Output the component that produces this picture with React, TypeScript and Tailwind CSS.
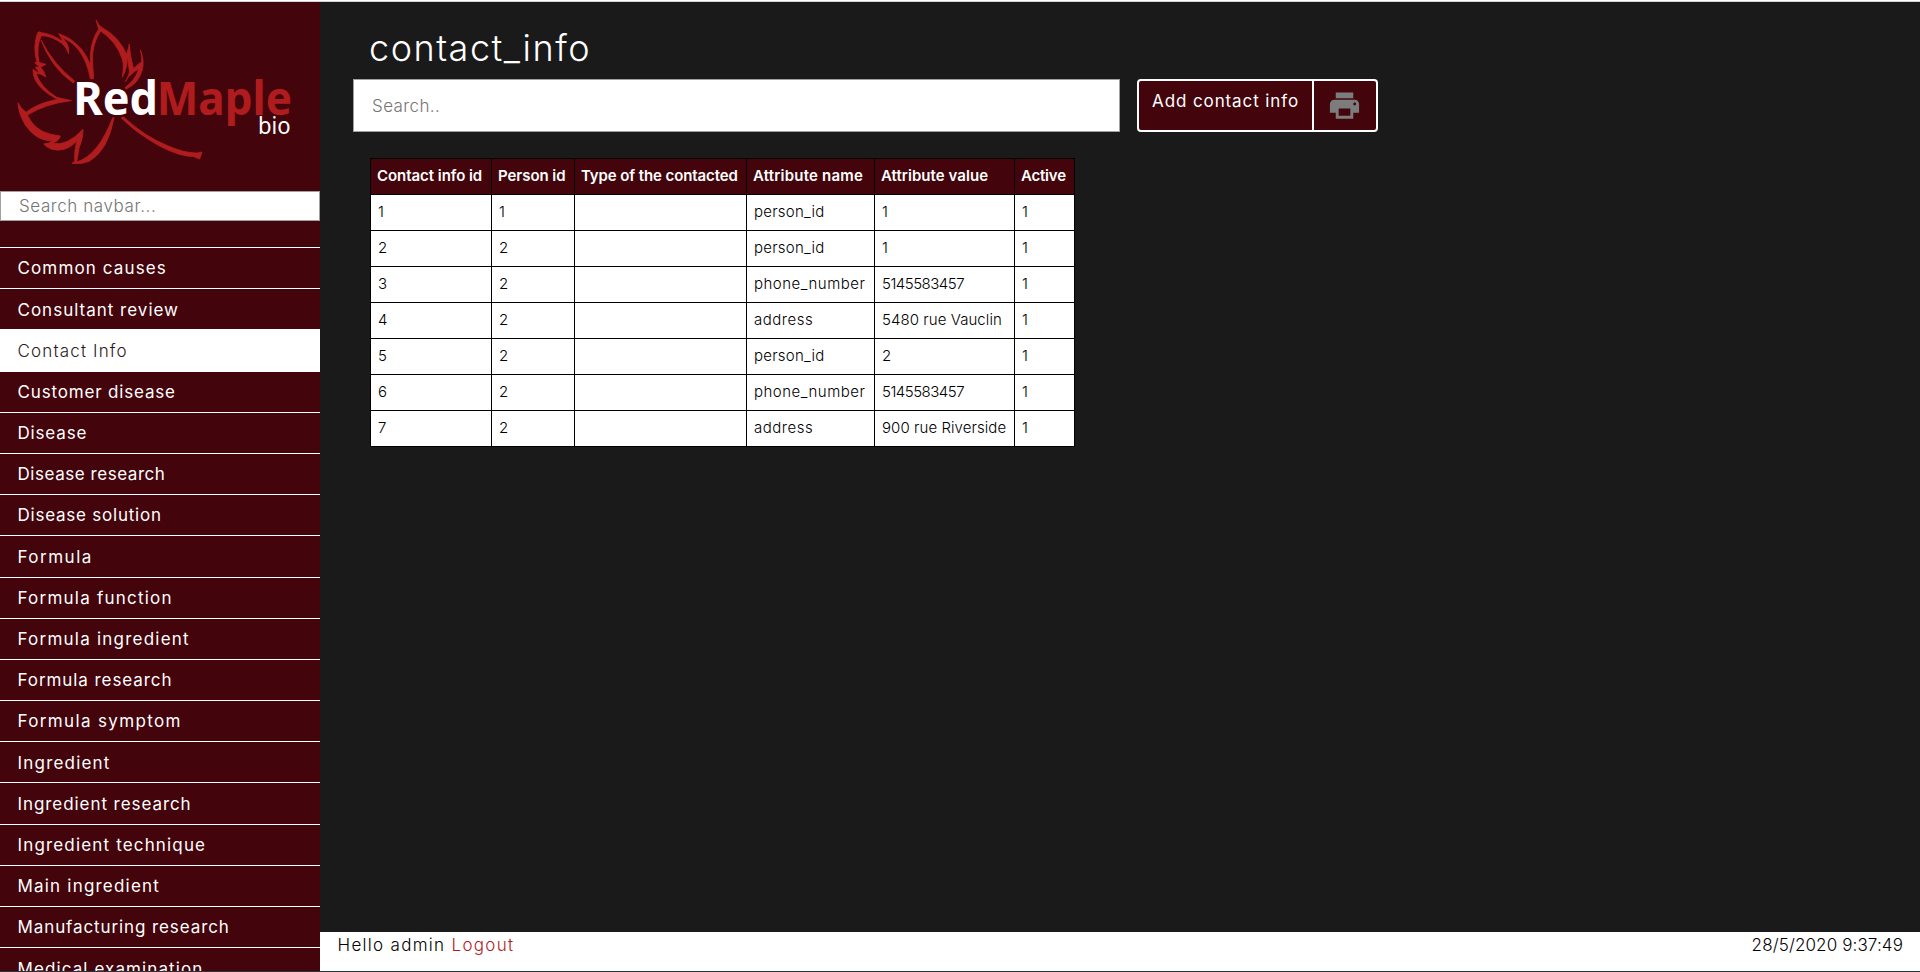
import { MdPrint } from "react-icons/md";

const navItems = [
  { label: "Common causes", tracking: "tracking-[1.13px]" },
  { label: "Consultant review", tracking: "tracking-[1px]" },
  { label: "Contact Info", tracking: "tracking-[1.15px]", active: true },
  { label: "Customer disease", tracking: "tracking-[0.83px]" },
  { label: "Disease", tracking: "tracking-[0.83px]" },
  { label: "Disease research", tracking: "tracking-[0.55px]" },
  { label: "Disease solution", tracking: "tracking-[0.77px]" },
  { label: "Formula", tracking: "tracking-[1.5px]" },
  { label: "Formula function", tracking: "tracking-[1.23px]" },
  { label: "Formula ingredient", tracking: "tracking-[1.23px]" },
  { label: "Formula research", tracking: "tracking-[0.93px]" },
  { label: "Formula symptom", tracking: "tracking-[1.35px]" },
  { label: "Ingredient", tracking: "tracking-[1.2px]" },
  { label: "Ingredient research", tracking: "tracking-[0.93px]" },
  { label: "Ingredient technique", tracking: "tracking-[1.16px]" },
  { label: "Main ingredient", tracking: "tracking-[1.2px]" },
  { label: "Manufacturing research", tracking: "tracking-[0.9px]" },
  { label: "Medical examination", tracking: "tracking-[1.1px]" },
];

const columns = [
  { label: "Contact info id", style: "w-[121px] tracking-[-0.05px]" },
  { label: "Person id", style: "w-[83px] tracking-[-0.05px]" },
  { label: "Type of the contacted", style: "w-[172px] tracking-[-0.1px]" },
  { label: "Attribute name", style: "w-[128px] tracking-[0.2px]" },
  { label: "Attribute value", style: "w-[140px] tracking-[0.05px]" },
  { label: "Active", style: "w-[60px] tracking-[-0.2px]" },
];

const rows = [
  ["1", "1", "", "person_id", "1", "1"],
  ["2", "2", "", "person_id", "1", "1"],
  ["3", "2", "", "phone_number", "5145583457", "1"],
  ["4", "2", "", "address", "5480 rue Vauclin", "1"],
  ["5", "2", "", "person_id", "2", "1"],
  ["6", "2", "", "phone_number", "5145583457", "1"],
  ["7", "2", "", "address", "900 rue Riverside", "1"],
];

function cellTracking(cell: string) {
  if (cell === "person_id") return "tracking-[0.25px]";
  if (cell === "phone_number" || cell === "address") return "tracking-[0.5px]";
  if (cell.length === 10) return "tracking-[-0.5px]";
  return "tracking-[0.07px]";
}

function Logo() {
  return (
    <svg viewBox="0 0 960 567" className="h-[189px] w-[320px] shrink-0">
      <g transform="translate(0 -6)" fill="#b01c1e">
        {/* leaf outline */}
        <g stroke="#b01c1e" strokeWidth="2.5">
          <path d="M288 60Q298 80 307 83Q357 110 381 165Q385 198 367 232Q372 198 368 180Q350 125 302 93Q277 130 277 180L281 236L271 236Q262 185 236 150Q215 124 187 113L196 124Q208 138 206 161Q200 143 187 131Q152 106 124 107Q108 140 117 187Q124 190 138 193L122 202Q132 212 138 231Q123 220 108 220Q122 262 170 292L214 302Q140 310 82 345Q105 392 150 402Q168 406 181 408Q180 420 158 430Q200 440 249 388Q250 412 237 444L230 486Q295 466 338 353L342 353Q325 450 268 484Q245 494 216 490L224 484Q222 455 230 424Q195 460 153 447Q140 442 131 432Q145 432 158 422Q110 425 76 375Q55 340 54 308Q62 325 78 337Q112 310 172 298Q120 270 106 240Q98 224 99 208Q107 215 120 220L106 202L118 200L104 188L111 188Q97 140 113 98Q119 93 124 98Q155 101 188 124Q184 112 176 101Q215 113 245 148Q263 172 271 194Q268 125 296 88Z" />
          <path d="M123 120Q162 195 224 243L220 249Q155 205 123 120Z" />
          <path d="M388 132Q389 165 401 207L376 245Q390 221 388 210Q383 187 384 174L373 186Q382 160 388 132Z" />
          <path d="M421 150Q434 180 427 210Q415 252 378 267L375 263Q407 239 416 207Q402 213 389 228Q393 207 425 185Q427 169 421 150Z" />
          <path d="M363 353L372 352Q435 410 500 436Q548 457 578 458Q593 461 606 456L599 477Q580 467 560 468Q510 460 445 418Q400 390 363 353Z" />
        </g>
        <text x="470" y="344" fontFamily="Noto Sans" fontWeight="700" fontSize="140" textLength="406" lengthAdjust="spacingAndGlyphs">Maple</text>
      </g>
      <g transform="translate(0 -6)" fill="#fff">
        <text x="220" y="344" fontFamily="Noto Sans" fontWeight="700" fontSize="140" textLength="254" lengthAdjust="spacingAndGlyphs">Red</text>
        <text x="774" y="403" fontFamily="Noto Sans" fontSize="69" textLength="98" lengthAdjust="spacingAndGlyphs">bio</text>
      </g>
    </svg>
  );
}

function Sidebar() {
  return (
    <aside className="flex w-[320px] shrink-0 flex-col overflow-hidden bg-[#43040b]">
      <Logo />
      <input
        placeholder="Search navbar..."
        className="h-[30px] w-full shrink-0 border border-[#a0a0a0] bg-white px-[18px] text-[17px] font-light tracking-[0.58px] placeholder:text-[#757575]"
      />
      <nav className="flex flex-col pt-[26px]">
        {navItems.map((item) => (
          <a
            key={item.label}
            className={`flex h-[41.2px] shrink-0 items-center border-t border-white pl-[17.5px] pt-[2px] text-[17px] ${item.tracking} ${
              item.active ? "bg-white font-light text-[#2b1a1c]" : "text-white"
            }`}
          >
            {item.label}
          </a>
        ))}
      </nav>
    </aside>
  );
}

function ContactTable() {
  return (
    <table className="mt-[26px] w-[705px] table-fixed border-separate border-spacing-0 border-l border-t border-black text-[15px] leading-5">
      <thead>
        <tr className="h-9 bg-[#43040b] text-white">
          {columns.map((c) => (
            <th
              key={c.label}
              className={`${c.style} whitespace-nowrap border-b border-r border-black p-0 pb-px pl-[6px] text-left font-semibold`}
            >
              {c.label}
            </th>
          ))}
        </tr>
      </thead>
      <tbody>
        {rows.map((row) => (
          <tr key={row[0]} className="h-9 bg-white font-light text-black">
            {row.map((cell, i) => (
              <td
                key={i}
                className={`${cellTracking(cell)} whitespace-nowrap border-b border-r border-black p-0 pb-[2px] pl-[7px]`}
              >
                {cell}
              </td>
            ))}
          </tr>
        ))}
      </tbody>
    </table>
  );
}

export default function App() {
  return (
    <div className="flex h-[972px] w-[1920px] flex-col overflow-hidden border-b border-[#28343a] bg-[#1a1a1a] font-['Inter',sans-serif]">
      <div className="h-[2px] shrink-0 border-b border-[#d5d5d5] bg-white" />
      <div className="flex min-h-0 flex-1">
        <Sidebar />
        <div className="flex flex-1 flex-col">
          <main className="flex flex-1 flex-col pl-[33px] pt-[23px]">
            <h1 className="h-[54px] pl-4 text-[36px] font-light leading-[47px] tracking-[1.5px] text-white">
              contact_info
            </h1>
            <div className="flex h-[53px] gap-[17px]">
              <input
                placeholder="Search.."
                className="w-[767px] border border-[#a0a0a0] bg-white px-[18px] pt-[2px] text-[17px] font-light tracking-[0.4px] placeholder:text-[#757575]"
              />
              <div className="flex w-[241px] rounded-[4px] border-2 border-white bg-[#43040b]">
                <button className="flex w-[175px] shrink-0 items-start whitespace-nowrap border-r-2 border-white pl-[13px] pt-[8px] text-[17px] leading-[25px] tracking-[0.9px] text-white">
                  Add contact info
                </button>
                <button className="flex flex-1 items-center justify-center pr-[2px] text-[#7c7c7c]">
                  <MdPrint className="size-[35px]" />
                </button>
              </div>
            </div>
            <div className="flex pl-[17px]">
              <ContactTable />
            </div>
          </main>
          <footer className="flex h-[39px] shrink-0 justify-between bg-white pl-[17.5px] pr-[17px] pt-[1px] text-[17px] font-light leading-[25px] text-black">
            <p className="tracking-[1.3px]">
              Hello admin <a className="text-[#b01c1e]">Logout</a>
            </p>
            <p className="tracking-[0.12px]">28/5/2020 9:37:49</p>
          </footer>
        </div>
      </div>
    </div>
  );
}
